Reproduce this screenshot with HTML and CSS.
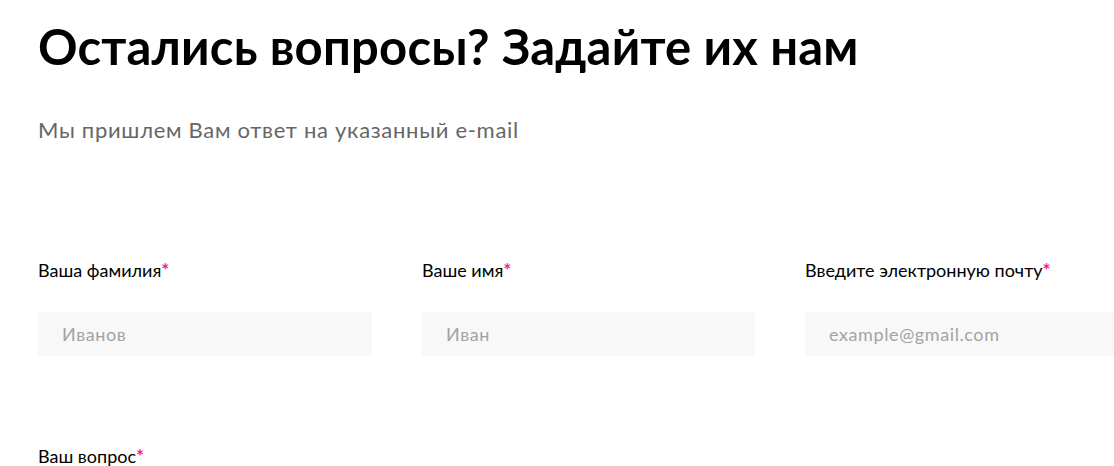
FILE: index.html
```html
<!DOCTYPE html>
<html lang="ru">
<head>
<meta charset="utf-8">
<link rel="stylesheet" href="styles.css">
</head>
<body>
<section class="feedback">
  <h1 class="title">Остались вопросы? Задайте их нам</h1>
  <p class="subtitle">Мы пришлем Вам ответ на указанный e-mail</p>
  <form class="form">
    <div class="row">
      <label class="field">
        <span class="label">Ваша фамилия<span class="req">*</span></span>
        <input class="input" type="text" placeholder="Иванов">
      </label>
      <label class="field">
        <span class="label">Ваше имя<span class="req">*</span></span>
        <input class="input" type="text" placeholder="Иван">
      </label>
      <label class="field">
        <span class="label">Введите электронную почту<span class="req">*</span></span>
        <input class="input" type="email" placeholder="example@gmail.com">
      </label>
    </div>
    <div class="row single">
      <label class="field">
        <span class="label">Ваш вопрос<span class="req">*</span></span>
      </label>
    </div>
  </form>
</section>
</body>
</html>
```
FILE: styles.css
```css
html, body {
  margin: 0;
  padding: 0;
  background: #ffffff;
  overflow: hidden;
}
body {
  font-family: "Lato", "Noto Sans", sans-serif;
  color: #000;
}
.feedback {
  padding: 18px 0 0 38px;
  width: 1102px;
}
.title {
  margin: 0;
  font-size: 49px;
  line-height: 56px;
  font-weight: 700;
  letter-spacing: 0.2px;
}
.subtitle {
  margin: 43px 0 0;
  font-size: 22px;
  line-height: 26px;
  letter-spacing: 0.7px;
  color: #666666;
}
.form {
  margin-top: 116px;
}
.row {
  display: grid;
  grid-template-columns: 334px 333px 334px;
  column-gap: 50px;
}
.row.single {
  margin-top: 89px;
}
.field {
  display: flex;
  flex-direction: column;
  gap: 31px;
}
.label {
  font-size: 18px;
  line-height: 22px;
  color: #000;
}
.req {
  color: #ff1a8c;
  font-weight: 700;
  font-size: 19px;
}
.input {
  box-sizing: border-box;
  height: 44px;
  width: 100%;
  border: none;
  outline: none;
  background: #f8f8f8;
  padding: 0 24px;
  font-family: inherit;
  font-size: 18px;
  letter-spacing: 0.6px;
  color: #000;
}
.input::placeholder {
  color: #a3a3a3;
}
```
